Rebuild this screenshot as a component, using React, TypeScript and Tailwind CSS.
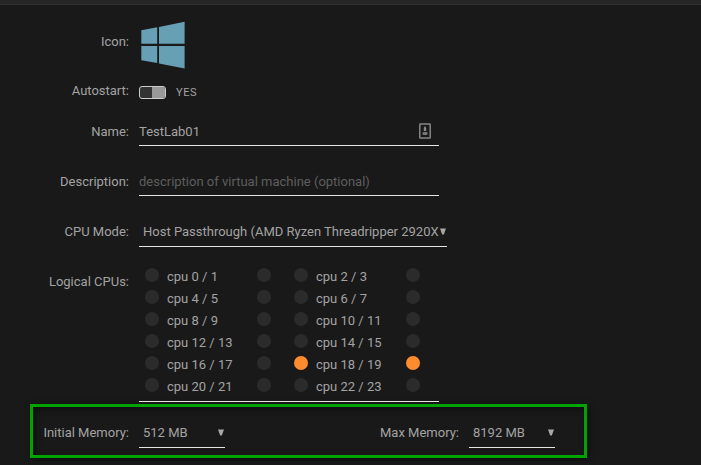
import React, { useState } from 'react';

const labelClass = 'w-[129px] shrink-0 text-right';

const cpuPairs = [
  [0, 1], [2, 3],
  [4, 5], [6, 7],
  [8, 9], [10, 11],
  [12, 13], [14, 15],
  [16, 17], [18, 19],
  [20, 21], [22, 23]
];

const WindowsLogo: React.FC = () => (
  <svg viewBox="0 0 44 48" className="ml-0.5 w-11 h-12" fill="#679fb5" role="img" aria-label="Windows">
    <path d="M0.3 9.2 L16.2 6.3 V22.8 H0.3 Z" />
    <path d="M18 6 L43.6 0.8 V22.8 H18 Z" />
    <path d="M0.3 25 H16.2 V42.1 L0.3 39.2 Z" />
    <path d="M18 25 H43.6 V47.6 L18 42.5 Z" />
  </svg>
);

const AutofillIcon: React.FC = () => (
  <svg viewBox="0 0 12 16" className="w-3 h-4" aria-hidden="true">
    <rect x="0.8" y="1" width="10.4" height="14" rx="0.5" fill="none" stroke="#858585" strokeWidth="1.5" />
    <path d="M6 3 L7.2 5 V8 H4.8 V5 Z" fill="#8a8a8a" />
    <rect x="3.5" y="9" width="5" height="3" rx="1" fill="#777777" />
  </svg>
);

type SelectProps = {
  id: string;
  options: string[];
  className: string;
};

const Select: React.FC<SelectProps> = ({ id, options, className }) => (
  <div className={`relative ${className}`}>
    <select
      id={id}
      className="block w-full h-[30px] appearance-none bg-transparent border-b border-[#e5e5e5] pl-1 pr-2 outline-none"
    >
      {options.map((option) => (
        <option key={option} className="bg-[#191919]">{option}</option>
      ))}
    </select>
    <svg viewBox="0 0 6 7" className="absolute right-px top-[11px] w-1.5 h-[7px] pointer-events-none" aria-hidden="true">
      <path d="M0 0.5 H6 L3.8 6.5 H2.2 Z" fill="#a8a8a8" />
    </svg>
  </div>
);

const App: React.FC = () => {
  const [autostart, setAutostart] = useState(true);
  const [name, setName] = useState('TestLab01');
  const [description, setDescription] = useState('');
  const [selected, setSelected] = useState<number[]>([18, 19]);

  const toggleCpu = (cpu: number) => {
    setSelected((prev) => (prev.includes(cpu) ? prev.filter((c) => c !== cpu) : [...prev, cpu]));
  };

  const cpuBox = (cpu: number) => (
    <input
      type="checkbox"
      aria-label={`cpu ${cpu}`}
      checked={selected.includes(cpu)}
      onChange={() => toggleCpu(cpu)}
      className="appearance-none w-3.5 h-3.5 mb-0.5 shrink-0 rounded-full bg-[#2b2b2b] checked:bg-[#ff8c2f]"
    />
  );

  return (
    <div className="min-h-screen bg-[#191919] text-[#a3a3a3] text-[13px] leading-5 font-[Roboto,sans-serif]">
      <header className="h-[5px] bg-[#262626] border-b border-[#303030]" />

      <form className="pt-4 pb-1">
        <div className="flex items-center gap-2.5 h-12">
          <span className={`${labelClass} pb-1.5`}>Icon:</span>
          <WindowsLogo />
        </div>

        <div className="flex items-start gap-2.5 mt-3">
          <label htmlFor="autostart" className={labelClass}>Autostart:</label>
          <div className="flex items-center gap-2.5 pt-0.5">
            <button
              id="autostart"
              type="button"
              role="switch"
              aria-checked={autostart}
              onClick={() => setAutostart(!autostart)}
              className={`flex w-[27px] h-[13px] mb-0.5 rounded-[3px] border border-[#cccccc] bg-[#333333] overflow-hidden ${autostart ? 'justify-end' : 'justify-start'}`}
            >
              <span className="w-[13px] h-full bg-[#999999]" />
            </button>
            <span className="text-[11px] tracking-wider">{autostart ? 'YES' : 'NO'}</span>
          </div>
        </div>

        <div className="flex items-center gap-2.5 mt-3.5">
          <label htmlFor="name" className={labelClass}>Name:</label>
          <div className="flex items-center w-[300px] h-[29px] border-b border-[#e5e5e5] pr-2">
            <input
              id="name"
              type="text"
              value={name}
              onChange={(e) => setName(e.target.value)}
              className="flex-1 min-w-0 pt-0.5 bg-transparent outline-none"
            />
            <AutofillIcon />
          </div>
        </div>

        <div className="flex items-center gap-2.5 mt-[21px]">
          <label htmlFor="description" className={labelClass}>Description:</label>
          <input
            id="description"
            type="text"
            value={description}
            placeholder="description of virtual machine (optional)"
            onChange={(e) => setDescription(e.target.value)}
            className="w-[300px] h-[29px] bg-transparent border-b border-[#e5e5e5] outline-none placeholder:text-[#5e5e5e]"
          />
        </div>

        <div className="flex items-center gap-2.5 mt-[21px]">
          <label htmlFor="cpu-mode" className={labelClass}>CPU Mode:</label>
          <Select
            id="cpu-mode"
            className="w-[308px]"
            options={['Host Passthrough (AMD Ryzen Threadripper 2920X 12-Core)', 'Emulated (QEMU64)']}
          />
        </div>

        <div className="flex items-start gap-2.5 mt-[18px]">
          <span className={`${labelClass} pt-[7px]`}>Logical CPUs:</span>
          <div className="grid grid-cols-[149px_149px] w-[300px] pb-1 border-b border-[#e5e5e5]">
            {cpuPairs.map(([a, b]) => (
              <div key={a} className="flex items-center h-[22px] pl-1.5">
                {cpuBox(a)}
                <span className="w-[98px] pl-2 pt-0.5">cpu {a} / {b}</span>
                {cpuBox(b)}
              </div>
            ))}
          </div>
        </div>

        <div className="flex items-center gap-2.5 w-[557px] max-w-full h-[54px] ml-[30px] mt-0.5 pt-1 border-3 border-[#00a300] shadow-[2px_2px_6px_#00000080,inset_2px_2px_6px_#00000080]">
          <label htmlFor="initial-memory" className="w-24 shrink-0 text-right">Initial Memory:</label>
          <Select id="initial-memory" className="w-[86px]" options={['512 MB', '1024 MB', '2048 MB', '4096 MB', '8192 MB']} />
          <label htmlFor="max-memory" className="flex-1 text-right">Max Memory:</label>
          <Select id="max-memory" className="w-[86px] mr-[29px]" options={['8192 MB', '16384 MB', '32768 MB']} />
        </div>
      </form>
    </div>
  );
};

export default App;
